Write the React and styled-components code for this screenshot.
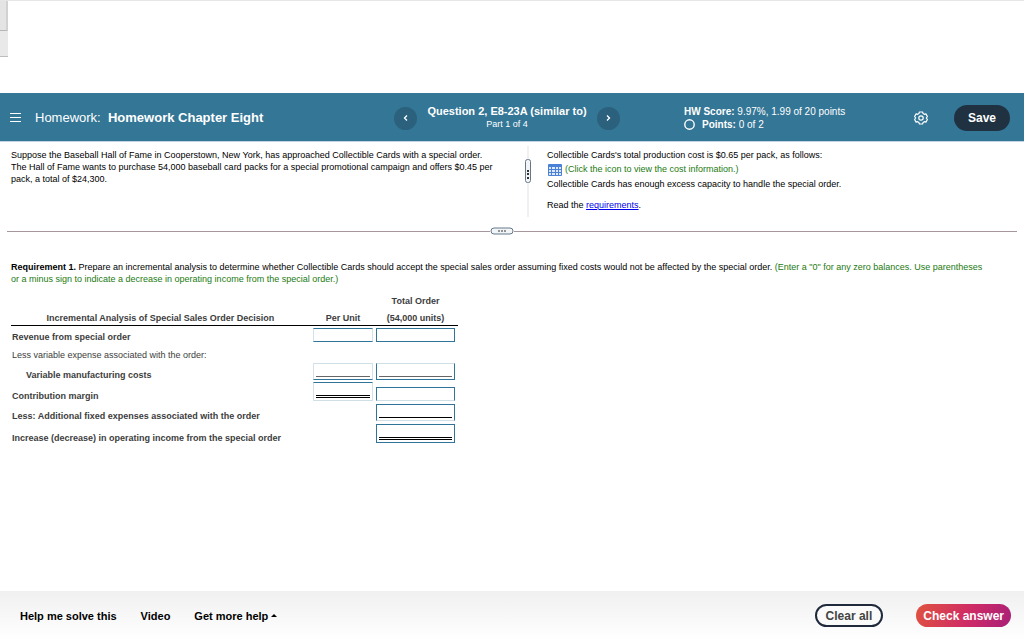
import React from "react";
import styled, { createGlobalStyle, css } from "styled-components";

const GlobalStyle = createGlobalStyle`
  * {
    box-sizing: border-box;
  }
  body {
    margin: 0;
    background: #fff;
    color: #000;
    font-family: "Liberation Sans", Arial, sans-serif;
    font-size: 9px;
    line-height: 12px;
  }
  button, input {
    font-family: inherit;
  }
`;

const Page = styled.div`
  display: flex;
  flex-direction: column;
  min-height: 100vh;
`;
const WindowTop = styled.div`
  height: 93px;
  border-top: 1px solid #e6e6e6;
`;
const WindowEdge = styled.div`
  width: 8px;
  height: 56px;
  border-bottom: 1px solid #bdbdbd;
  background: #e9e9e9;
`;
const TabEdge = styled.div`
  height: 30px;
  border-right: 2px solid #d2d2d2;
  border-bottom: 1px solid #b5b5b5;
  background: #e4e4e4;
`;

const Header = styled.header`
  display: grid;
  grid-template-columns: 385fr 226fr 390fr;
  align-items: center;
  height: 49px;
  padding: 2px 14px 0 9px;
  border-bottom: 1px solid #c3d3e4;
  background: #337696;
  color: #fff;
`;
const TitleGroup = styled.div`
  display: flex;
  align-items: center;
  gap: 14px;
`;
const IconButton = styled.button`
  display: flex;
  padding: 0;
  border: 0;
  background: none;
  color: inherit;
`;
const Title = styled.h1`
  margin: 0;
  font-size: 13px;
  line-height: 16px;
  font-weight: 400;
  white-space: pre;
`;
const QuestionNav = styled.nav`
  display: flex;
  align-items: center;
  justify-content: space-between;
`;
const RoundButton = styled.button`
  display: flex;
  align-items: center;
  justify-content: center;
  width: 23px;
  height: 23px;
  padding: 0;
  border: 0;
  border-radius: 50%;
  background: #2b617d;
  color: #fff;
`;
const QuestionTitle = styled.div`
  padding-bottom: 2px;
  text-align: center;
  white-space: nowrap;
`;
const QuestionName = styled.div`
  font-size: 11px;
  line-height: 14px;
  font-weight: 700;
`;
const HeaderEnd = styled.div`
  display: flex;
  align-items: center;
  padding-left: 64px;
`;
const Score = styled.div`
  flex: 1;
  font-size: 10px;
  line-height: 13px;
  white-space: nowrap;
`;
const PointsRow = styled.div`
  display: flex;
  align-items: center;
  gap: 7px;
`;
const SaveButton = styled.button`
  margin-left: 26px;
  padding: 5px 14px;
  border: 0;
  border-radius: 13px;
  background: #203142;
  color: #fff;
  font-size: 12px;
  line-height: 16px;
  font-weight: 700;
`;

const Main = styled.main`
  flex: 1;
  padding: 4px 7px 16px;
`;
const Scenario = styled.section`
  display: grid;
  grid-template-columns: 520fr 490fr;
`;
const ScenarioText = styled.p`
  margin: 0;
  padding: 3px 16px 0 4px;
`;
const ScenarioSide = styled.div`
  position: relative;
  padding: 3px 0 4px 18px;
  border-left: 2px solid #f1f1f3;
`;
const SideLine = styled.p`
  display: flex;
  align-items: center;
  margin: 0 0 ${(props) => props.$gap || 2}px;
  white-space: pre;
`;
const Hint = styled.span`
  color: #237a10;
`;
const CostButton = styled.button`
  display: flex;
  align-items: center;
  gap: 3px;
  padding: 0 0 0 1px;
  border: 0;
  background: none;
  color: #237a10;
  font-size: 9px;
  line-height: 13px;
`;
const Link = styled.a`
  color: #0000ee;
`;
const SideHandle = styled.span`
  position: absolute;
  top: 13px;
  left: -4px;
  display: flex;
`;
const Splitter = styled.div`
  display: flex;
  align-items: center;
  margin-top: 10px;
  &:before,
  &:after {
    content: "";
    height: 1px;
    background: #a8969e;
  }
  &:before {
    flex: 483;
  }
  &:after {
    flex: 503;
  }
`;
const Requirement = styled.p`
  margin: 26px 0 0;
  padding-left: 4px;
`;

const Table = styled.table`
  margin: 8px 0 0 4px;
  border-collapse: separate;
  border-spacing: 0;
  color: #3d3d3d;
`;
const HeadCell = styled.th`
  padding: 0 3px 0 0;
  height: 14px;
  vertical-align: bottom;
  text-align: center;
  ${(props) =>
    props.$last &&
    css`
      height: 19px;
      padding-bottom: 1px;
      border-bottom: 1px solid #000;
    `}
`;
const Row = styled.tr`
  height: ${(props) => props.$height}px;
`;
const RowLabel = styled.th`
  width: 302px;
  padding: 0 0 0 ${(props) => (props.$indent ? 15 : 1)}px;
  text-align: left;
  vertical-align: bottom;
  font-weight: ${(props) => (props.$plain ? 400 : 700)};
`;
const Cell = styled.td`
  width: ${(props) => (props.$wide ? 82 : 63)}px;
  padding: 0 3px 1px 0;
  vertical-align: bottom;
`;
const underlines = {
  single: "1px solid",
  double: "3px double",
};
const Field = styled.div`
  display: flex;
  height: ${(props) => props.$height}px;
  padding: 0 2px ${(props) => (props.$line ? 2 : 0)}px;
  border: 1px solid #2f7599;
  ${(props) =>
    props.$pale &&
    css`
      border-left-color: #d3e2ea;
      border-right-color: #d3e2ea;
    `}
  ${(props) =>
    props.$paleEdge &&
    css`
      border-${props.$paleEdge}-color: #cfdfe8;
    `}
`;
const AmountInput = styled.input`
  width: 100%;
  min-width: 0;
  padding: 0;
  border: 0;
  border-bottom: ${(props) => underlines[props.$line] || "0 solid"} ${(props) => props.$lineColor || "#000"};
  background: none;
  font-size: 9px;
  outline: none;
`;

const Footer = styled.footer`
  display: flex;
  align-items: center;
  height: 49px;
  padding: 0 13px 0 20px;
  background: linear-gradient(#f0f0f0, #fff);
`;
const FooterLinks = styled.div`
  display: flex;
  flex: 1;
  gap: 24px;
`;
const TextButton = styled.button`
  display: flex;
  align-items: center;
  gap: 3px;
  padding: 0;
  border: 0;
  background: none;
  color: #000;
  font-size: 11px;
  line-height: 14px;
  font-weight: 700;
`;
const PillButton = styled.button`
  height: 23px;
  padding: 0 ${(props) => (props.$primary ? 7 : 9)}px;
  border: ${(props) => (props.$primary ? "0" : "2px solid #202a3c")};
  border-radius: 12px;
  background: ${(props) => (props.$primary ? "linear-gradient(110deg, #e0533f, #cf2b65 55%, #a81f78)" : "#fafafa")};
  color: ${(props) => (props.$primary ? "#fff" : "#444")};
  font-size: 12px;
  line-height: 14px;
  font-weight: 700;
  & + & {
    margin-left: 33px;
  }
`;

const rows = [
  {
    label: "Revenue from special order",
    height: 17,
    unit: { height: 14 },
    total: { height: 14 },
  },
  { label: "Less variable expense associated with the order:", height: 18, plain: true },
  {
    label: "Variable manufacturing costs",
    height: 20,
    indent: true,
    unit: { height: 17, line: "single", color: "#666", paleEdge: "top" },
    total: { height: 17, line: "single", color: "#666", paleEdge: "top" },
  },
  {
    label: "Contribution margin",
    height: 21,
    unit: { height: 19, line: "double", paleEdge: "bottom" },
    total: { height: 14, paleEdge: "bottom" },
  },
  {
    label: "Less: Additional fixed expenses associated with the order",
    height: 20,
    total: { height: 17, line: "single", paleEdge: "bottom" },
  },
  {
    label: "Increase (decrease) in operating income from the special order",
    height: 22,
    total: { height: 19, line: "double" },
  },
];

function Amount({ field, label, pale }) {
  return (
    <Field $height={field.height} $line={field.line} $pale={pale} $paleEdge={field.paleEdge}>
      <AmountInput type="text" aria-label={label} $line={field.line} $lineColor={field.color} />
    </Field>
  );
}

function Chevron({ d }) {
  return (
    <svg width="8" height="8" viewBox="0 0 8 8" fill="none" stroke="currentColor" strokeWidth="1.3">
      <path d={d} />
    </svg>
  );
}

function GearIcon() {
  return (
    <svg width="14" height="14" viewBox="0 0 14 14" fill="none" stroke="currentColor" strokeWidth="1.2">
      <path
        d="M5.4 1h3.2l.5 1.600 1.200.7 1.600-.4 1.500 2.600L12.300 7l1.100 1.500-1.500 2.600-1.600-.4-1.200.7-.5 1.600H5.400l-.5-1.600-1.200-.7-1.600.4L.6 8.500 1.700 7 .6 5.500l1.500-2.600 1.600.4 1.200-.7z"
        strokeLinejoin="round"
      />
      <circle cx="7" cy="7" r="2.200" />
    </svg>
  );
}

function PointsRing() {
  return (
    <svg width="11" height="11" viewBox="0 0 11 11" fill="none" stroke="currentColor" strokeWidth="1.4">
      <circle cx="5.500" cy="5.500" r="4.700" />
    </svg>
  );
}

function TableIcon() {
  return (
    <svg width="14" height="12" viewBox="0 0 14 12">
      <rect width="14" height="12" rx="1" fill="#4a80d8" />
      <path
        d="M1 3h2v2H1zM4 3h3v2H4zM8 3h2v2H8zM11 3h2v2h-2zM1 6h2v2H1zM4 6h3v2H4zM8 6h2v2H8zM11 6h2v2h-2zM1 9h2v2H1zM4 9h3v2H4zM8 9h2v2H8zM11 9h2v2h-2z"
        fill="#dce9fb"
      />
    </svg>
  );
}

function App() {
  return (
    <Page>
      <GlobalStyle />
      <WindowTop>
        <WindowEdge>
          <TabEdge />
        </WindowEdge>
      </WindowTop>
      <Header>
        <TitleGroup>
          <IconButton type="button" aria-label="Menu">
            <svg width="12" height="12" viewBox="0 0 12 12" stroke="currentColor">
              <path d="M1 1.500h11M1 5.500h11M1 9.500h11" />
            </svg>
          </IconButton>
          <Title>
            Homework:{"  "}
            <b>Homework Chapter Eight</b>
          </Title>
        </TitleGroup>
        <QuestionNav>
          <RoundButton type="button" aria-label="Previous">
            <Chevron d="M5 1.500 2.500 4 5 6.500" />
          </RoundButton>
          <QuestionTitle>
            <QuestionName>Question 2, E8-23A (similar to)</QuestionName>
            <div>Part 1 of 4</div>
          </QuestionTitle>
          <RoundButton type="button" aria-label="Next">
            <Chevron d="M3 1.500 5.500 4 3 6.500" />
          </RoundButton>
        </QuestionNav>
        <HeaderEnd>
          <Score>
            <div>
              <b>HW Score:</b> 9.97%, 1.99 of 20 points
            </div>
            <PointsRow>
              <PointsRing />
              <span>
                <b>Points:</b> 0 of 2
              </span>
            </PointsRow>
          </Score>
          <IconButton type="button" aria-label="Settings">
            <GearIcon />
          </IconButton>
          <SaveButton type="button">Save</SaveButton>
        </HeaderEnd>
      </Header>

      <Main>
        <Scenario>
          <ScenarioText>
            Suppose the Baseball Hall of Fame in Cooperstown, New York, has approached Collectible Cards with a special
            order.
            <br />
            The Hall of Fame wants to purchase 54,000 baseball card packs for a special promotional campaign and offers
            $0.45 per
            <br />
            pack, a total of $24,300.
          </ScenarioText>
          <ScenarioSide>
            <SideHandle>
              <svg width="6" height="24" viewBox="0 0 6 24">
                <rect x=".5" y=".5" width="5" height="23" rx="2" fill="#f2f5f8" stroke="#64788a" />
                <path d="M2 11h2v2H2zM2 14h2v2H2zM2 18h2v2H2z" fill="#333" />
              </svg>
            </SideHandle>
            <SideLine>Collectible Cards's total production cost is $0.65 per pack, as follows:</SideLine>
            <SideLine>
              <CostButton type="button">
                <TableIcon />
                (Click the icon to view the cost information.)
              </CostButton>
            </SideLine>
            <SideLine $gap={9}>Collectible Cards has enough excess capacity to handle the special order.</SideLine>
            <SideLine>
              Read the <Link href="#requirements">requirements</Link>.
            </SideLine>
          </ScenarioSide>
        </Scenario>
        <Splitter>
          <svg width="24" height="8" viewBox="0 0 24 8">
            <rect x="1" y="1" width="22" height="6" rx="3" fill="#f2f5f8" stroke="#64788a" />
            <path d="M8 3.500h2v1H8zM11 3.500h2v1h-2zM14 3.500h2v1h-2z" fill="#333" />
          </svg>
        </Splitter>
        <Requirement>
          <b>Requirement 1.</b> Prepare an incremental analysis to determine whether Collectible Cards should accept the
          special sales order assuming fixed costs would not be affected by the special order.{" "}
          <Hint>
            (Enter a "0" for any zero balances. Use parentheses
            <br />
            or a minus sign to indicate a decrease in operating income from the special order.)
          </Hint>
        </Requirement>
        <Table>
          <thead>
            <tr>
              <HeadCell />
              <HeadCell />
              <HeadCell>Total Order</HeadCell>
            </tr>
            <tr>
              <HeadCell $last>Incremental Analysis of Special Sales Order Decision</HeadCell>
              <HeadCell $last>Per Unit</HeadCell>
              <HeadCell $last>(54,000 units)</HeadCell>
            </tr>
          </thead>
          <tbody>
            {rows.map((row) => (
              <Row key={row.label} $height={row.height}>
                <RowLabel scope="row" $indent={row.indent} $plain={row.plain}>
                  {row.label}
                </RowLabel>
                <Cell>{row.unit && <Amount field={row.unit} label={row.label + " per unit"} pale />}</Cell>
                <Cell $wide>{row.total && <Amount field={row.total} label={row.label + " total"} />}</Cell>
              </Row>
            ))}
          </tbody>
        </Table>
      </Main>

      <Footer>
        <FooterLinks>
          <TextButton type="button">Help me solve this</TextButton>
          <TextButton type="button">Video</TextButton>
          <TextButton type="button">
            Get more help
            <svg width="6" height="3" viewBox="0 0 6 3">
              <path d="M3 0 6 3H0z" />
            </svg>
          </TextButton>
        </FooterLinks>
        <PillButton type="button">Clear all</PillButton>
        <PillButton type="button" $primary>
          Check answer
        </PillButton>
      </Footer>
    </Page>
  );
}
export default App;
